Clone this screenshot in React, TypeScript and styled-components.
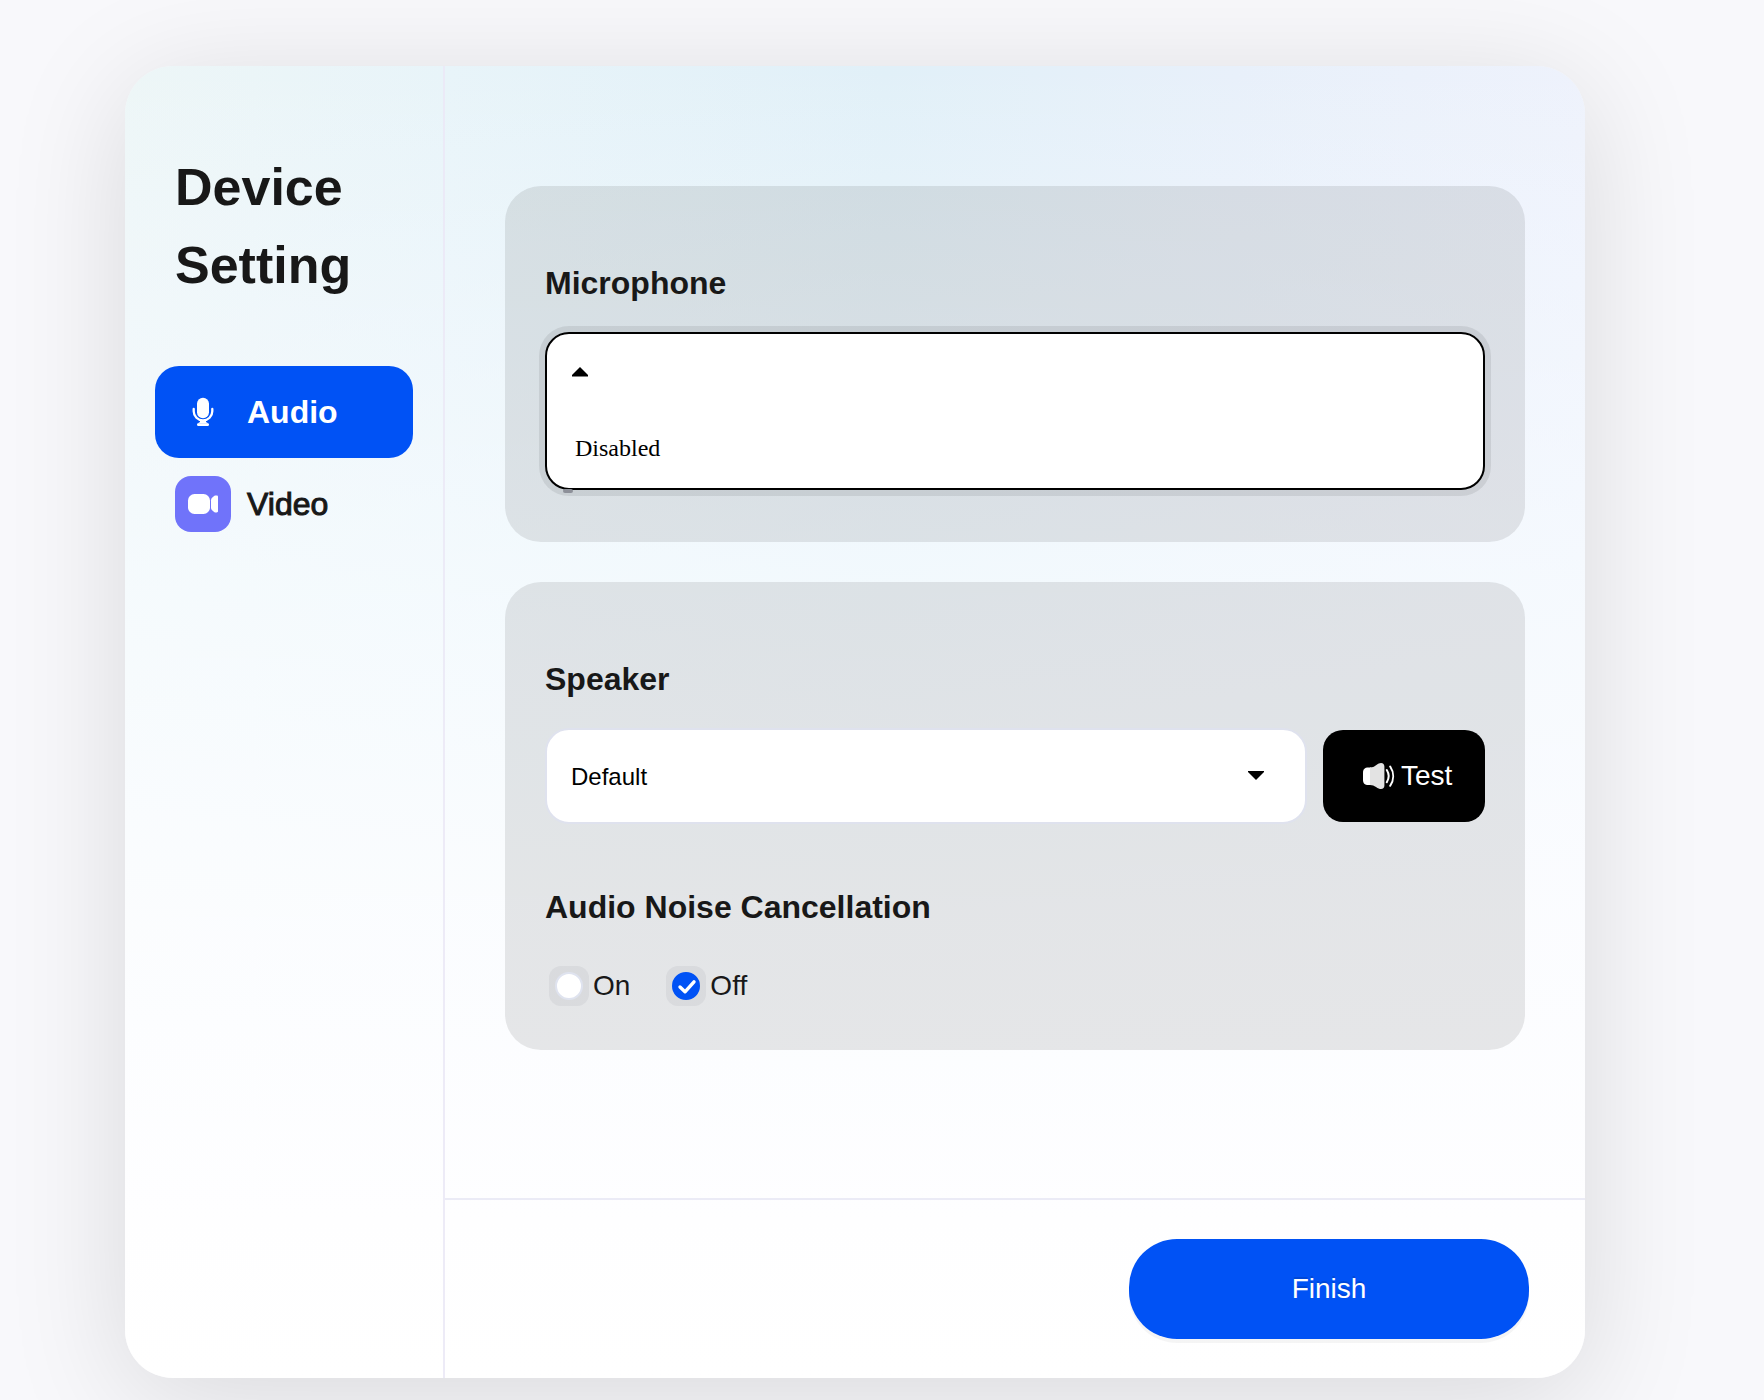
import React, { useState } from "react";
import styled, { createGlobalStyle } from "styled-components";

const blue = "#0052f5";
const ink = "#181818";
const sans = '"Liberation Sans", Arial, Helvetica, sans-serif';
const serif = '"Liberation Serif", "Times New Roman", serif';

const GlobalStyle = createGlobalStyle`
  *, *::before, *::after { box-sizing: border-box; }
  body {
    margin: 0;
    background: #f8f8fb;
    color: ${ink};
    font-family: ${sans};
  }
  button, input, select { font: inherit; color: inherit; }
`;

const Page = styled.div`
  display: flex;
  min-height: 100vh;
  padding: 66px 179px 22px 125px;
`;

const Dialog = styled.div`
  flex: 1;
  display: flex;
  min-width: 0;
  border-radius: 48px;
  overflow: hidden;
  background:
    linear-gradient(
      180deg,
      rgba(246, 250, 255, 0) 0%,
      rgba(246, 250, 255, 0.45) 20%,
      rgba(248, 252, 255, 0.75) 40%,
      rgba(252, 253, 255, 0.93) 65%,
      #fefeff 88%,
      #ffffff 100%
    ),
    linear-gradient(90deg, #edf6f7 0%, #e8f4f9 22%, #e1f0f8 52%, #e8f0fa 76%, #eef2fc 100%);
  box-shadow: 0 20px 120px rgba(0, 0, 0, 0.13);
`;

const Sidebar = styled.aside`
  flex: none;
  width: 320px;
  padding: 82px 30px 40px;
  border-right: 2px solid rgba(235, 233, 246, 0.9);
`;

const Title = styled.h1`
  margin: 0 0 62px;
  padding: 0 20px;
  font-size: 52px;
  line-height: 78px;
  font-weight: 700;
`;

const NavItem = styled.button<{ $active?: boolean }>`
  display: flex;
  align-items: center;
  gap: 16px;
  width: 100%;
  height: 92px;
  padding: 0 20px;
  border: 0;
  border-radius: 24px;
  background: ${(p) => (p.$active ? blue : "transparent")};
  color: ${(p) => (p.$active ? "#ffffff" : ink)};
  font-size: 32px;
  font-weight: ${(p) => (p.$active ? 700 : 400)};
  -webkit-text-stroke: ${(p) => (p.$active ? "0" : "1px")} currentColor;
  cursor: pointer;
`;

const NavIcon = styled.svg<{ $fill?: string }>`
  flex: none;
  width: 56px;
  height: 56px;
  border-radius: 16px;
  background: ${(p) => p.$fill ?? "transparent"};
`;

const Main = styled.main`
  flex: 1;
  min-width: 0;
  display: flex;
  flex-direction: column;
`;

const Content = styled.div`
  flex: 1;
  display: flex;
  flex-direction: column;
  gap: 40px;
  padding: 120px 60px 148px;
`;

const Panel = styled.section`
  padding: 73px 40px 44px;
  border-radius: 36px;
  background: rgba(27, 29, 33, 0.1);
`;

const MicPanel = styled(Panel)`
  padding-bottom: 52px;
`;

const Label = styled.label`
  display: block;
  margin-bottom: 25px;
  font-size: 32px;
  line-height: 48px;
  font-weight: 700;
`;

const OpenSelect = styled.div`
  position: relative;
  border: 2px solid #000000;
  border-radius: 24px;
  background: #ffffff;
  box-shadow: 0 0 0 6px rgba(0, 0, 0, 0.08);
`;

const Toggle = styled.button`
  display: flex;
  align-items: center;
  width: 100%;
  height: 76px;
  padding: 0 25px;
  border: 0;
  background: none;
  cursor: pointer;
`;

const OptionList = styled.select`
  display: block;
  width: 100%;
  height: 78px;
  padding: 25px 28px;
  border: 0;
  outline: 0;
  border-radius: 22px;
  background: none;
  color: #000000;
  appearance: none;
  overflow: hidden;
  font-family: ${serif};
  font-size: 24px;

  option {
    padding: 0;
    min-height: 28px;
  }
`;

const CaretMark = styled.span`
  position: absolute;
  left: 16px;
  top: 155px;
  width: 10px;
  height: 4px;
  border-radius: 2px;
  background: #8d9099;
`;

const Row = styled.div`
  display: flex;
  align-items: center;
  gap: 16px;
  margin-bottom: 59px;
`;

const SelectBox = styled.div`
  flex: 1;
  display: grid;
  align-items: center;
  min-width: 0;
  border: 2px solid #dfe2ee;
  border-radius: 24px;
  background: #ffffff;
`;

const Select = styled.select`
  grid-area: 1 / 1;
  width: 100%;
  height: 92px;
  padding: 0 60px 0 24px;
  border: 0;
  border-radius: 22px;
  background: none;
  color: #000000;
  font-size: 24px;
  appearance: none;
`;

const Caret = styled.svg<{ $trailing?: boolean }>`
  width: 16px;
  height: 10px;
  ${(p) =>
    p.$trailing &&
    `
    grid-area: 1 / 1;
    justify-self: end;
    margin-right: 41px;
    pointer-events: none;
  `}
`;

const TestButton = styled.button`
  display: flex;
  align-items: center;
  gap: 6px;
  min-width: 162px;
  height: 92px;
  padding: 0 32px;
  border: 0;
  border-radius: 20px;
  background: #000000;
  color: #ffffff;
  font-size: 28px;
  cursor: pointer;

  svg {
    width: 40px;
    height: 40px;
  }
`;

const Fieldset = styled.fieldset`
  min-width: 0;
  margin: 0;
  padding: 0;
  border: 0;
`;

const Legend = styled.legend`
  padding: 0 0 35px;
  font-size: 32px;
  line-height: 48px;
  font-weight: 700;
`;

const Choices = styled.div`
  display: flex;
  gap: 36px;
  padding-left: 4px;
`;

const Choice = styled.label`
  display: flex;
  align-items: center;
  gap: 4px;
  font-size: 28px;
  line-height: 40px;
`;

const RadioBox = styled.span`
  display: grid;
  place-items: center;
  width: 40px;
  height: 40px;
  border-radius: 12px;
  background: rgba(27, 29, 33, 0.05);

  input {
    grid-area: 1 / 1;
    width: 28px;
    height: 28px;
    margin: 0;
    border: 2px solid #dfe3ef;
    border-radius: 50%;
    background: #ffffff;
    appearance: none;
  }
  input:checked {
    border-color: ${blue};
    background: ${blue};
  }
  svg {
    grid-area: 1 / 1;
    z-index: 1;
    width: 28px;
    height: 28px;
    pointer-events: none;
    visibility: hidden;
  }
  input:checked + svg {
    visibility: visible;
  }
`;

const Footer = styled.footer`
  display: flex;
  align-items: center;
  justify-content: flex-end;
  min-height: 180px;
  padding: 0 56px;
  border-top: 2px solid #ebebf6;
`;

const FinishButton = styled.button`
  min-width: 400px;
  height: 100px;
  border: 0;
  border-radius: 48px;
  background: ${blue};
  color: #ffffff;
  font-size: 28px;
  text-shadow: 0 -2px 0 rgba(0, 0, 0, 0.12);
  box-shadow: 0 4px 0 rgba(0, 0, 0, 0.04);
  cursor: pointer;
`;

function MicIcon() {
  return (
    <NavIcon viewBox="0 0 56 56" aria-hidden="true">
      <rect x="22" y="13.700" width="12" height="20.500" rx="6" fill="#fff" />
      <path d="M18.700 25v2.200a9.300 9.300 0 0 0 18.600 0V25" fill="none" stroke="#fff" strokeWidth="2.300" strokeLinecap="round" />
      <path d="M25 36.500h6v1.500l2.500 1.500h-11l2.500-1.500z" fill="#fff" />
      <rect x="22" y="39.200" width="12" height="2.900" rx="1.400" fill="#fff" />
    </NavIcon>
  );
}

function VideoIcon() {
  return (
    <NavIcon $fill="#7073fa" viewBox="0 0 56 56" aria-hidden="true">
      <rect x="13" y="18" width="22" height="20" rx="6.500" fill="#fff" />
      <path d="M36 24.200c0-1 .4-1.800 1.100-2.400l2-1.700c.6-.5 1.200-.5 1.900-.5h.7c.8 0 1.300.5 1.300 1.200v14.400c0 .7-.5 1.200-1.300 1.200H41c-.7 0-1.300 0-1.900-.5l-2-1.700c-.7-.6-1.100-1.400-1.100-2.400z" fill="#fff" />
    </NavIcon>
  );
}

function SpeakerIcon() {
  return (
    <svg viewBox="0 0 40 40" aria-hidden="true">
      <path d="M16 11.500h-2.500C9.500 11.500 8 13.500 8 16.500v7.400c0 3 1.500 5 5.500 5H16z" fill="#fff" />
      <path d="M15 11.500c2.600 0 4-.8 6-2.200C23 7.800 24.600 7 26 7c2.200 0 3.400 1.500 3.400 3.600v18.800c0 2.100-1.200 3.600-3.400 3.600-1.400 0-3-.8-5-2.100-2-1.300-3.400-2-6-2z" fill="#e3e3e3" />
      <path d="M31.800 14c2.300 3.700 2.300 8.500 0 12.200M35.200 10.500c3.900 5.900 3.900 13.400 0 19.300" fill="none" stroke="#fff" strokeWidth="2" strokeLinecap="round" />
    </svg>
  );
}

const noiseOptions = ["On", "Off"];

export default function App() {
  const [noise, setNoise] = useState("Off");
  return (
    <>
      <GlobalStyle />
      <Page>
        <Dialog>
          <Sidebar>
            <Title>Device Setting</Title>
            <nav>
              <NavItem type="button" $active>
                <MicIcon />
                Audio
              </NavItem>
              <NavItem type="button">
                <VideoIcon />
                Video
              </NavItem>
            </nav>
          </Sidebar>
          <Main>
            <Content>
              <MicPanel>
                <Label htmlFor="microphone">Microphone</Label>
                <OpenSelect>
                  <Toggle type="button" aria-label="Close microphone list" aria-expanded="true">
                    <Caret viewBox="0 0 16 10" aria-hidden="true">
                      <path d="M8 0l8 8v1.500H0V8z" />
                    </Caret>
                  </Toggle>
                  <OptionList id="microphone" size={2}>
                    <option>Disabled</option>
                  </OptionList>
                  <CaretMark />
                </OpenSelect>
              </MicPanel>
              <Panel>
                <Label htmlFor="speaker">Speaker</Label>
                <Row>
                  <SelectBox>
                    <Select id="speaker">
                      <option>Default</option>
                    </Select>
                    <Caret $trailing viewBox="0 0 16 10" aria-hidden="true">
                      <path d="M0 0h16v1L8 9 0 1z" />
                    </Caret>
                  </SelectBox>
                  <TestButton type="button">
                    <SpeakerIcon />
                    Test
                  </TestButton>
                </Row>
                <Fieldset>
                  <Legend>Audio Noise Cancellation</Legend>
                  <Choices>
                    {noiseOptions.map((option) => (
                      <Choice key={option}>
                        <RadioBox>
                          <input
                            type="radio"
                            name="noise"
                            value={option}
                            checked={noise === option}
                            onChange={() => setNoise(option)}
                          />
                          <svg viewBox="0 0 28 28" aria-hidden="true">
                            <path d="M8 15l5 4.800 9-10" fill="none" stroke="#fff" strokeWidth="3.400" strokeLinecap="round" strokeLinejoin="round" />
                          </svg>
                        </RadioBox>
                        {option}
                      </Choice>
                    ))}
                  </Choices>
                </Fieldset>
              </Panel>
            </Content>
            <Footer>
              <FinishButton type="button">Finish</FinishButton>
            </Footer>
          </Main>
        </Dialog>
      </Page>
    </>
  );
}
